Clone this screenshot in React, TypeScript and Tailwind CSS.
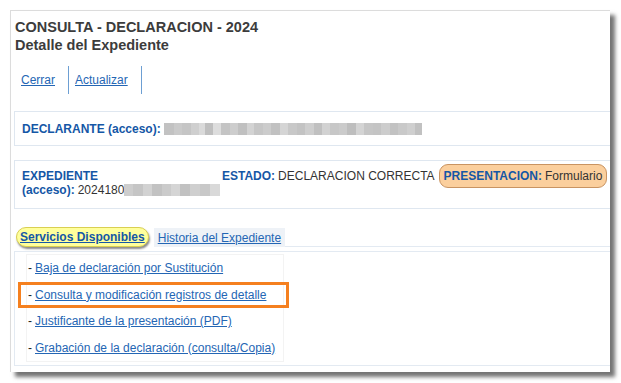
import React from 'react';

const blurA = [
  'bg-[#c2c2c2] w-[10px]', 'bg-[#cacaca] w-[8px]', 'bg-[#c5c5c5] w-[9px]', 'bg-[#cfcfcf] w-[8px]', 'bg-[#dadada] w-[6px]',
  'bg-[#bfbfbf] w-[8px]', 'bg-[#dddddd] w-[8px]', 'bg-[#c4c4c4] w-[9px]', 'bg-[#cdcdcd] w-[8px]', 'bg-[#c0c0c0] w-[9px]',
  'bg-[#d3d3d3] w-[7px]', 'bg-[#c6c6c6] w-[9px]', 'bg-[#cccccc] w-[8px]', 'bg-[#c1c1c1] w-[9px]', 'bg-[#d5d5d5] w-[8px]',
  'bg-[#c8c8c8] w-[9px]', 'bg-[#c3c3c3] w-[8px]', 'bg-[#cecece] w-[9px]', 'bg-[#c0c0c0] w-[8px]', 'bg-[#d2d2d2] w-[8px]',
  'bg-[#c7c7c7] w-[9px]', 'bg-[#cbcbcb] w-[8px]', 'bg-[#bebebe] w-[9px]', 'bg-[#d4d4d4] w-[8px]', 'bg-[#c6c6c6] w-[9px]',
  'bg-[#c4c4c4] w-[8px]', 'bg-[#cdcdcd] w-[9px]', 'bg-[#c2c2c2] w-[8px]', 'bg-[#c9c9c9] w-[9px]', 'bg-[#cfcfcf] w-[8px]',
  'bg-[#c1c1c1] w-[7px]',
];

const blurB = [
  'bg-[#cdcdcd] w-[9px]', 'bg-[#c5c5c5] w-[10px]', 'bg-[#d2d2d2] w-[9px]', 'bg-[#c2c2c2] w-[10px]', 'bg-[#cbcbcb] w-[9px]',
  'bg-[#d5d5d5] w-[9px]', 'bg-[#c1c1c1] w-[10px]', 'bg-[#cfcfcf] w-[10px]', 'bg-[#c8c8c8] w-[10px]', 'bg-[#d9d9d9] w-[10px]',
];

function Blur(props: { blocks: string[]; className?: string }) {
  return (
    <span className={'flex shrink-0 bg-[#c8c8c8] ' + (props.className ?? '')}>
      {props.blocks.map((c, i) => (
        <span key={i} className={'block h-full shrink-0 ' + c} />
      ))}
    </span>
  );
}

const servicios = [
  'Baja de declaración por Sustitución',
  'Consulta y modificación registros de detalle',
  'Justificante de la presentación (PDF)',
  'Grabación de la declaración (consulta/Copia)',
];

export default function App() {
  return (
    <div className="w-[621px] h-[383px] bg-white font-['Liberation_Sans',Arial,sans-serif] text-[12px] text-[#333]">
      <div className="ml-[10px] mt-[10px] w-[600px] h-[362px] overflow-hidden bg-white border-l border-t border-[#dcdcdc] shadow-[5px_5px_4px_rgba(0,0,0,0.55)]">
        {/* cabecera */}
        <div className="pt-[7px] pl-[4px] text-[14.5px] leading-[18px] font-bold text-[#3c3c3c]">
          <div>CONSULTA - DECLARACION - 2024</div>
          <div>Detalle del Expediente</div>
        </div>

        <div className="flex mt-[12px] pl-[10px] h-[28px] items-center">
          <a className="h-full flex items-center pr-[13px] border-r border-[#6d9fd3] text-[#2466b4] underline">Cerrar</a>
          <a className="h-full flex items-center pl-[6px] pr-[13px] border-r border-[#6d9fd3] text-[#2466b4] underline">Actualizar</a>
        </div>

        {/* declarante */}
        <div className="mt-[17px] ml-[3px] w-[620px] h-[35px] border border-[#dfe7f0] flex items-center pl-[7px]">
          <span className="font-bold text-[#1557a6]">DECLARANTE (acceso):</span>
          <Blur blocks={blurA} className="ml-[3px] h-[12px]" />
        </div>

        {/* expediente */}
        <div className="mt-[14px] ml-[3px] w-[620px] h-[49px] border border-[#dfe7f0] flex pl-[7px] pt-[8px] leading-[14px]">
          <div className="w-[200px]">
            <div className="font-bold text-[#1557a6]">EXPEDIENTE</div>
            <div className="flex items-center">
              <span className="font-bold text-[#1557a6]">(acceso):</span>
              <span className="ml-[3px]">2024180</span>
              <Blur blocks={blurB} className="h-[12px]" />
            </div>
          </div>
          <div className="flex items-start">
            <span className="font-bold text-[#1557a6]">ESTADO:</span>
            <span className="ml-[3px]">DECLARACION CORRECTA</span>
            <span className="ml-[4px] -mt-[5px] h-[24px] px-[4px] flex items-center rounded-[9px] bg-[#fbcf9d] border border-[#c99462] whitespace-nowrap">
              <span className="font-bold text-[#1557a6]">PRESENTACION:</span>
              <span className="ml-[3px]">Formulario</span>
            </span>
          </div>
        </div>

        {/* pestañas */}
        <div className="mt-[18px] flex items-end pl-[5px]">
          <div className="h-[20px] px-[3px] flex items-center rounded-full bg-[#ffff9c] border border-[#d9cf52] shadow-[1px_2px_2px_rgba(0,0,0,0.45)] font-bold text-[#1557a6] underline">
            Servicios Disponibles
          </div>
          <div className="ml-[5px] h-[19px] px-[4px] flex items-center bg-[#eef2f7] text-[#2466b4] underline">
            Historia del Expediente
          </div>
          <div className="flex-1 border-b border-[#e3eaf2]" />
        </div>

        {/* servicios */}
        <div className="mt-[4px] ml-[3px] w-[620px] h-[115px] border border-[#e3eaf2] pt-[2px] pl-[11px]">
          <div className="w-[258px] border border-[#f3f3f3]">
            {servicios.map((s, i) => (
              <div key={s} className="relative h-[26.5px] flex items-center pl-[1px]">
                <span className="text-[#222]">-</span>
                <a className="ml-[3px] text-[#2466b4] underline">{s}</a>
                {i === 1 && (
                  <span className="absolute left-[-9px] right-[-6px] top-[0px] h-[26px] border-[3px] border-[#f5801f]" />
                )}
              </div>
            ))}
          </div>
        </div>
      </div>
    </div>
  );
}
